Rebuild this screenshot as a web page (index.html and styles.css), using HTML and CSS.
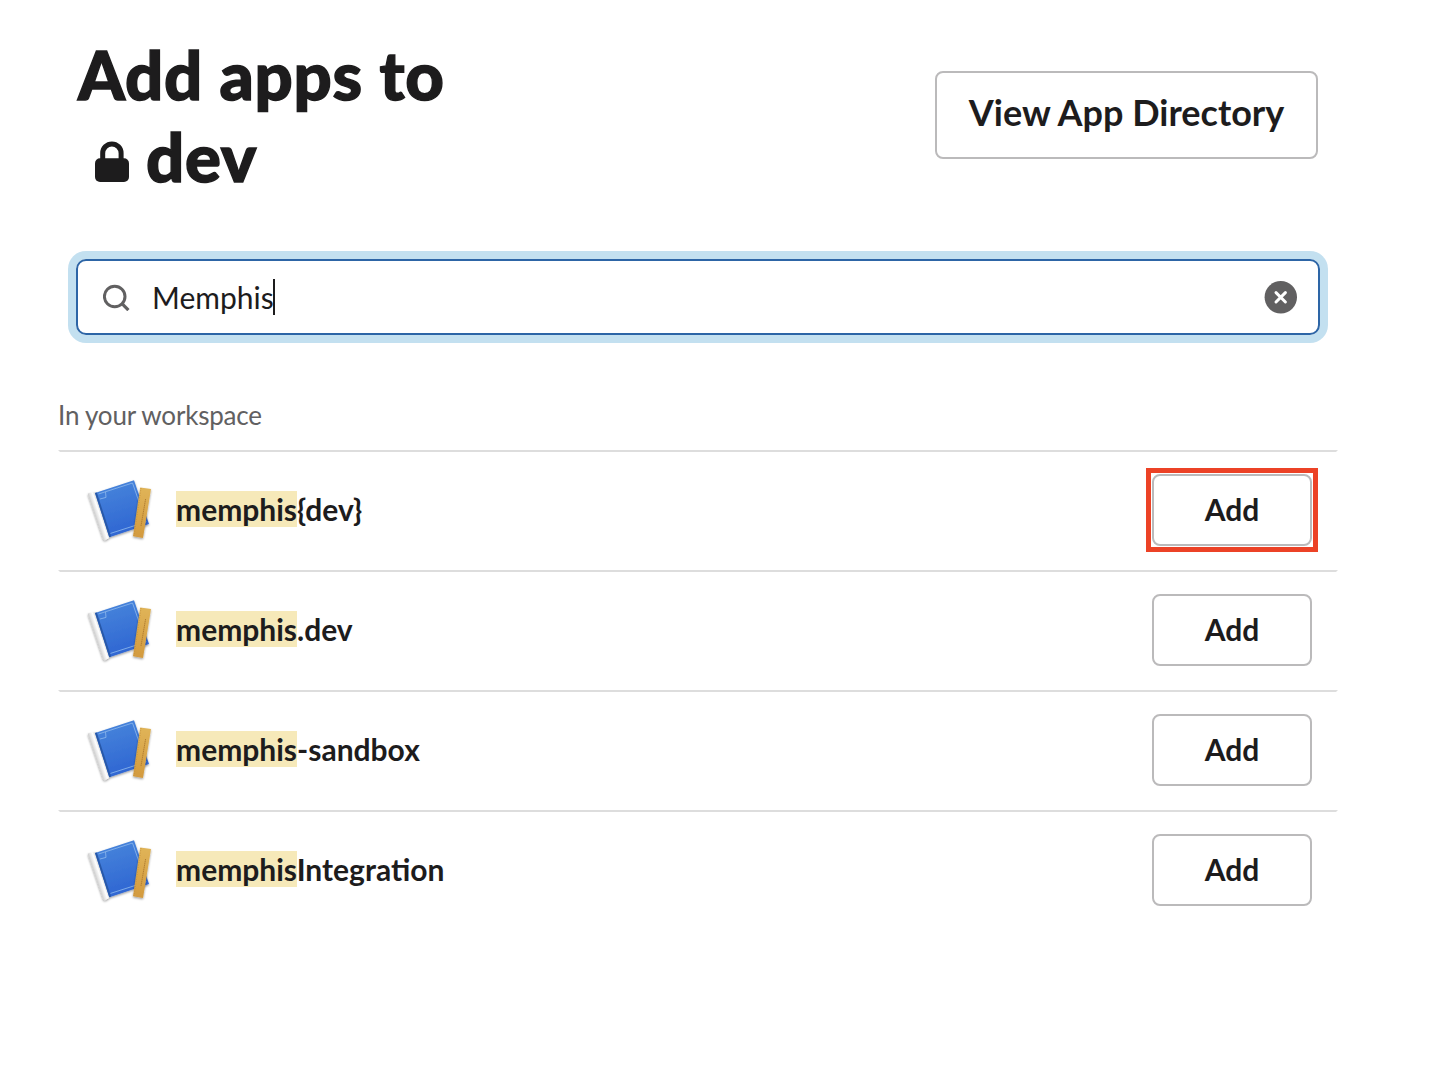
FILE: index.html
```html
<!DOCTYPE html>
<html lang="en">
<head>
<meta charset="utf-8">
<title>Add apps</title>
<link rel="stylesheet" href="styles.css">
</head>
<body>
<svg class="defs" width="0" height="0" aria-hidden="true">
  <defs>
    <linearGradient id="cover" x1="0" y1="0" x2="0.3" y2="1"><stop offset="0" stop-color="#4a88dc"/><stop offset="1" stop-color="#2f66d2"/></linearGradient>
    <linearGradient id="pages" gradientUnits="userSpaceOnUse" x1="14" y1="47" x2="23" y2="44"><stop offset="0" stop-color="#bcbcbc"/><stop offset="0.35" stop-color="#e4e4e4"/><stop offset="0.65" stop-color="#ffffff"/><stop offset="1" stop-color="#cccccc"/></linearGradient>
    <linearGradient id="wood" x1="0" y1="0" x2="0" y2="1"><stop offset="0" stop-color="#e0b458"/><stop offset="1" stop-color="#d39a3e"/></linearGradient>
    <filter id="shade" x="-20%" y="-20%" width="140%" height="140%"><feDropShadow dx="0" dy="1.2" stdDeviation="1.3" flood-color="#000" flood-opacity="0.4"/></filter>
    <symbol id="book" viewBox="0 0 80 80">
      <g filter="url(#shade)">
        <path d="M8 24.5 Q7.5 23.6 8.6 23.2 L15.5 22.3 L30 66 L29 68 L25.5 70 Q23.8 70.5 23 69Z" fill="url(#pages)"/>
        <path d="M15 23 L54 10.2 L69 54 L29.3 67.2Z" fill="url(#cover)"/>
      </g>
      <path d="M15 23 L16.8 22.4 L31.1 66.6 L29.3 67.2Z" fill="#2858a8"/>
      <path d="M18.5 24 L52.5 13 L66 52 L30.5 63.4 M20 29 L26 27.4 L25.5 22" fill="none" stroke="#86b2ea" stroke-width="0.9"/>
      <g filter="url(#shade)"><path d="M60.2 17.5 L71 19 L63 68 L53 66.2Z" fill="url(#wood)"/></g>
      <path d="M61 18 L54 66" stroke="#c28f3c" stroke-width="1" stroke-dasharray="0.8 1.6"/>
      <path d="M65.6 29 L61 56" stroke="#ae7a30" stroke-width="0.9" stroke-dasharray="1.5 0.5"/>
    </symbol>
  </defs>
</svg>
<main class="dialog">
  <header class="header">
    <h1 class="title">
      <span>Add apps to</span>
      <span class="channel"><svg class="lock" viewBox="0 0 34 42"><path d="M7.7 19V12.2a9.2 9.3 0 0 1 18.4 0V19" fill="none" stroke="currentColor" stroke-width="5"/><rect y="17.2" width="34" height="23.8" rx="5" fill="currentColor"/></svg>dev</span>
    </h1>
    <button class="btn btn-large">View App Directory</button>
  </header>
  <div class="search">
    <svg class="search-icon" viewBox="0 0 28 28" fill="none" stroke="currentColor"><circle cx="11.7" cy="13.5" r="10.3" stroke-width="3"/><path d="M19 20.7 L25.4 27.1" stroke-width="3.2"/></svg>
    <span class="query">Memphis</span><span class="caret"></span>
    <svg class="clear" viewBox="0 0 33 33"><circle cx="16.8" cy="16.3" r="16.2" fill="currentColor"/><path d="M12 11.6 L21.4 21 M21.4 11.6 L12 21" stroke="#fff" stroke-width="3" stroke-linecap="round"/></svg>
  </div>
  <h2 class="section-title">In your workspace</h2>
  <ul class="apps">
    <li class="app"><svg class="app-icon"><use href="#book"/></svg><span class="name"><mark>memphis</mark>{dev}</span><button class="btn btn-add highlighted">Add</button></li>
    <li class="app"><svg class="app-icon"><use href="#book"/></svg><span class="name"><mark>memphis</mark>.dev</span><button class="btn btn-add">Add</button></li>
    <li class="app"><svg class="app-icon"><use href="#book"/></svg><span class="name"><mark>memphis</mark>-sandbox</span><button class="btn btn-add">Add</button></li>
    <li class="app"><svg class="app-icon"><use href="#book"/></svg><span class="name"><mark>memphis</mark>Integration</span><button class="btn btn-add">Add</button></li>
  </ul>
</main>
</body>
</html>
```

FILE: styles.css
```css
* { box-sizing: border-box; }
body { margin: 0; background: #fff; color: #1d1c1d; font-family: Lato, sans-serif; }
.defs { position: absolute; }
.dialog { width: 1338px; padding: 33px 0 0 58px; }
.header { display: flex; justify-content: space-between; align-items: flex-start; padding: 0 20px; height: 218px; }
.title { margin: 0; font-size: 67px; font-weight: 900; line-height: 82px; letter-spacing: 0.7px; -webkit-text-stroke: 1.4px #1d1c1d; display: flex; flex-direction: column; white-space: nowrap; }
.channel { display: flex; align-items: flex-start; padding-left: 17px; gap: 17px; }
.lock { width: 34px; height: 42px; margin-top: 26px; }
.btn { display: block; background: #fff; color: #1d1c1d; border: 2px solid #bbbabb; border-radius: 8px; padding: 0; font-family: inherit; font-weight: 700; text-align: center; white-space: nowrap; }
.btn-large { width: 383px; height: 88px; margin-top: 38px; font-size: 36px; padding-bottom: 6px; }
.search { display: flex; align-items: center; width: 1244px; height: 76px; margin: 8px 0 0 18px; padding: 0 21px 0 25px; border: 2px solid #2d65a6; border-radius: 10px; box-shadow: 0 0 0 8px #c3e0f0; }
.search-icon { width: 28px; height: 28px; color: #616061; margin-right: 21px; }
.query { font-size: 30px; line-height: 36px; margin-right: -1px; }
.caret { width: 2px; height: 36px; background: #1d1c1d; }
.clear { width: 33px; height: 33px; margin-left: auto; color: #616061; }
.section-title { margin: 63px 0 0; height: 52px; color: #616061; font-size: 26px; font-weight: 400; line-height: 34px; letter-spacing: -0.2px; }
.apps { list-style: none; margin: 0; padding: 0; }
.app { display: flex; align-items: center; height: 120px; border: 2px solid transparent; border-top-color: #dddddd; padding: 0 24px 0 20px; }
.app-icon { width: 80px; height: 80px; margin-right: 16px; }
.name { font-size: 30px; font-weight: 700; line-height: 36px; padding-bottom: 2px; }
.name mark { background: #f6e9b9; color: inherit; }
.btn-add { width: 160px; height: 72px; margin-left: auto; font-size: 30px; padding-bottom: 2px; }
.highlighted { position: relative; }
.highlighted::after { content: ""; position: absolute; inset: -8px; border: 5px solid #ec4226; }
```
